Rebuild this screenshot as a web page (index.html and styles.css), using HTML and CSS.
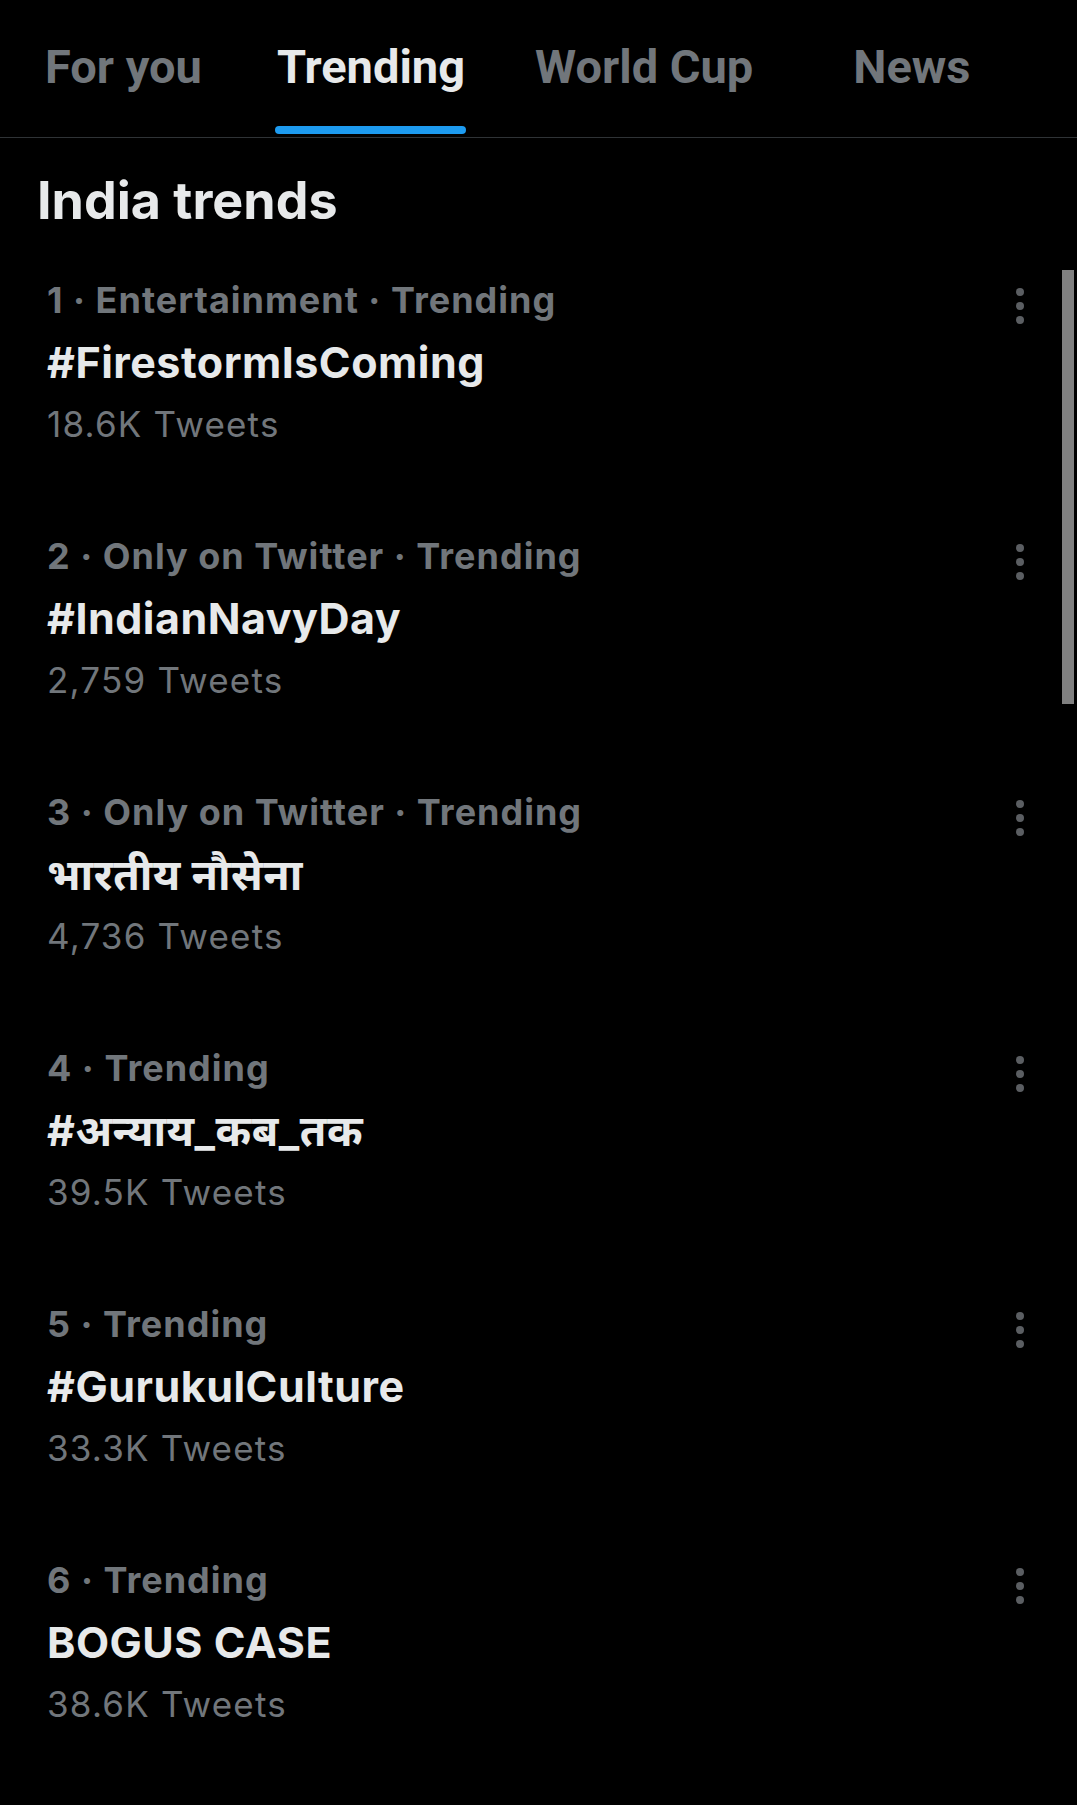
FILE: index.html
```html
<!DOCTYPE html>
<html lang="en">
<head>
<meta charset="utf-8">
<title>Trending</title>
<link rel="stylesheet" href="styles.css">
</head>
<body>
<header class="tabs">
  <div class="tab tab-foryou"><span class="tab-label">For you</span></div>
  <div class="tab tab-trending active"><span class="tab-label">Trending</span><span class="tab-bar"></span></div>
  <div class="tab tab-worldcup"><span class="tab-label">World Cup</span></div>
  <div class="tab tab-news"><span class="tab-label">News</span></div>
</header>
<main class="content">
  <h1 class="section-title">India trends</h1>
  <ul class="trends">
    <li class="trend">
      <div class="trend-text">
        <div class="meta">1 · Entertainment · Trending</div>
        <div class="name">#FirestormIsComing</div>
        <div class="count">18.6K Tweets</div>
      </div>
      <svg class="more" viewBox="0 0 8 36" width="8" height="36"><circle cx="4" cy="4" r="4"/><circle cx="4" cy="18" r="4"/><circle cx="4" cy="32" r="4"/></svg>
    </li>
    <li class="trend">
      <div class="trend-text">
        <div class="meta">2 · Only on Twitter · Trending</div>
        <div class="name">#IndianNavyDay</div>
        <div class="count">2,759 Tweets</div>
      </div>
      <svg class="more" viewBox="0 0 8 36" width="8" height="36"><circle cx="4" cy="4" r="4"/><circle cx="4" cy="18" r="4"/><circle cx="4" cy="32" r="4"/></svg>
    </li>
    <li class="trend">
      <div class="trend-text">
        <div class="meta">3 · Only on Twitter · Trending</div>
        <div class="name">भारतीय नौसेना</div>
        <div class="count">4,736 Tweets</div>
      </div>
      <svg class="more" viewBox="0 0 8 36" width="8" height="36"><circle cx="4" cy="4" r="4"/><circle cx="4" cy="18" r="4"/><circle cx="4" cy="32" r="4"/></svg>
    </li>
    <li class="trend">
      <div class="trend-text">
        <div class="meta">4 · Trending</div>
        <div class="name">#अन्याय_कब_तक</div>
        <div class="count">39.5K Tweets</div>
      </div>
      <svg class="more" viewBox="0 0 8 36" width="8" height="36"><circle cx="4" cy="4" r="4"/><circle cx="4" cy="18" r="4"/><circle cx="4" cy="32" r="4"/></svg>
    </li>
    <li class="trend">
      <div class="trend-text">
        <div class="meta">5 · Trending</div>
        <div class="name">#GurukulCulture</div>
        <div class="count">33.3K Tweets</div>
      </div>
      <svg class="more" viewBox="0 0 8 36" width="8" height="36"><circle cx="4" cy="4" r="4"/><circle cx="4" cy="18" r="4"/><circle cx="4" cy="32" r="4"/></svg>
    </li>
    <li class="trend">
      <div class="trend-text">
        <div class="meta">6 · Trending</div>
        <div class="name">BOGUS CASE</div>
        <div class="count">38.6K Tweets</div>
      </div>
      <svg class="more" viewBox="0 0 8 36" width="8" height="36"><circle cx="4" cy="4" r="4"/><circle cx="4" cy="18" r="4"/><circle cx="4" cy="32" r="4"/></svg>
    </li>
  </ul>
  <div class="scrollbar"></div>
</main>
</body>
</html>
```
FILE: styles.css
```css
html, body {
  margin: 0;
  padding: 0;
  background: #000;
}
body {
  width: 1077px;
  min-height: 1805px;
  overflow: hidden;
  font-family: Inter, "Noto Sans", "Noto Sans Devanagari", sans-serif;
  color: #e7e9ea;
}
.tabs {
  display: flex;
  height: 137px;
  border-bottom: 1px solid #2f3336;
  box-sizing: content-box;
}
.tab {
  display: flex;
  flex-direction: column;
  align-items: stretch;
  padding-top: 44px;
  font-family: Roboto, "Liberation Sans", sans-serif;
  font-weight: 700;
  font-size: 47px;
  line-height: 45px;
  color: #71767b;
  white-space: nowrap;
}
.tab.active { color: #e7e9ea; }
.tab-foryou { margin-left: 45px; }
.tab-trending { margin-left: 75px; }
.tab-worldcup { margin-left: 70px; }
.tab-news { margin-left: 100px; }
.tab-bar {
  display: block;
  height: 8px;
  margin: 37px -1px 0 -2px;
  border-radius: 4px;
  background: #1d9bf0;
}
.content {
  position: relative;
  padding-top: 37px;
}
.section-title {
  margin: 0;
  padding-left: 37px;
  font-size: 52px;
  line-height: 52px;
  font-weight: 700;
  color: #e7e9ea;
}
.trends {
  list-style: none;
  margin: 42px 0 0 0;
  padding: 0;
}
.trend {
  display: flex;
  justify-content: space-between;
  align-items: flex-start;
  height: 256px;
  padding-left: 47px;
  padding-right: 53px;
}
.meta {
  font-size: 36px;
  line-height: 62px;
  font-weight: 700;
  letter-spacing: 1px;
  color: #71767b;
}
.name {
  font-size: 43px;
  line-height: 63px;
  font-weight: 700;
  letter-spacing: 0.5px;
  color: #e7e9ea;
}
.count {
  font-size: 35px;
  line-height: 61px;
  font-weight: 400;
  letter-spacing: 1.2px;
  color: #71767b;
}
.more {
  margin-top: 19px;
  fill: #5b5e62;
  flex: none;
}
.scrollbar {
  position: absolute;
  top: 132px;
  right: 3px;
  width: 12px;
  height: 434px;
  background: #808080;
}
```
